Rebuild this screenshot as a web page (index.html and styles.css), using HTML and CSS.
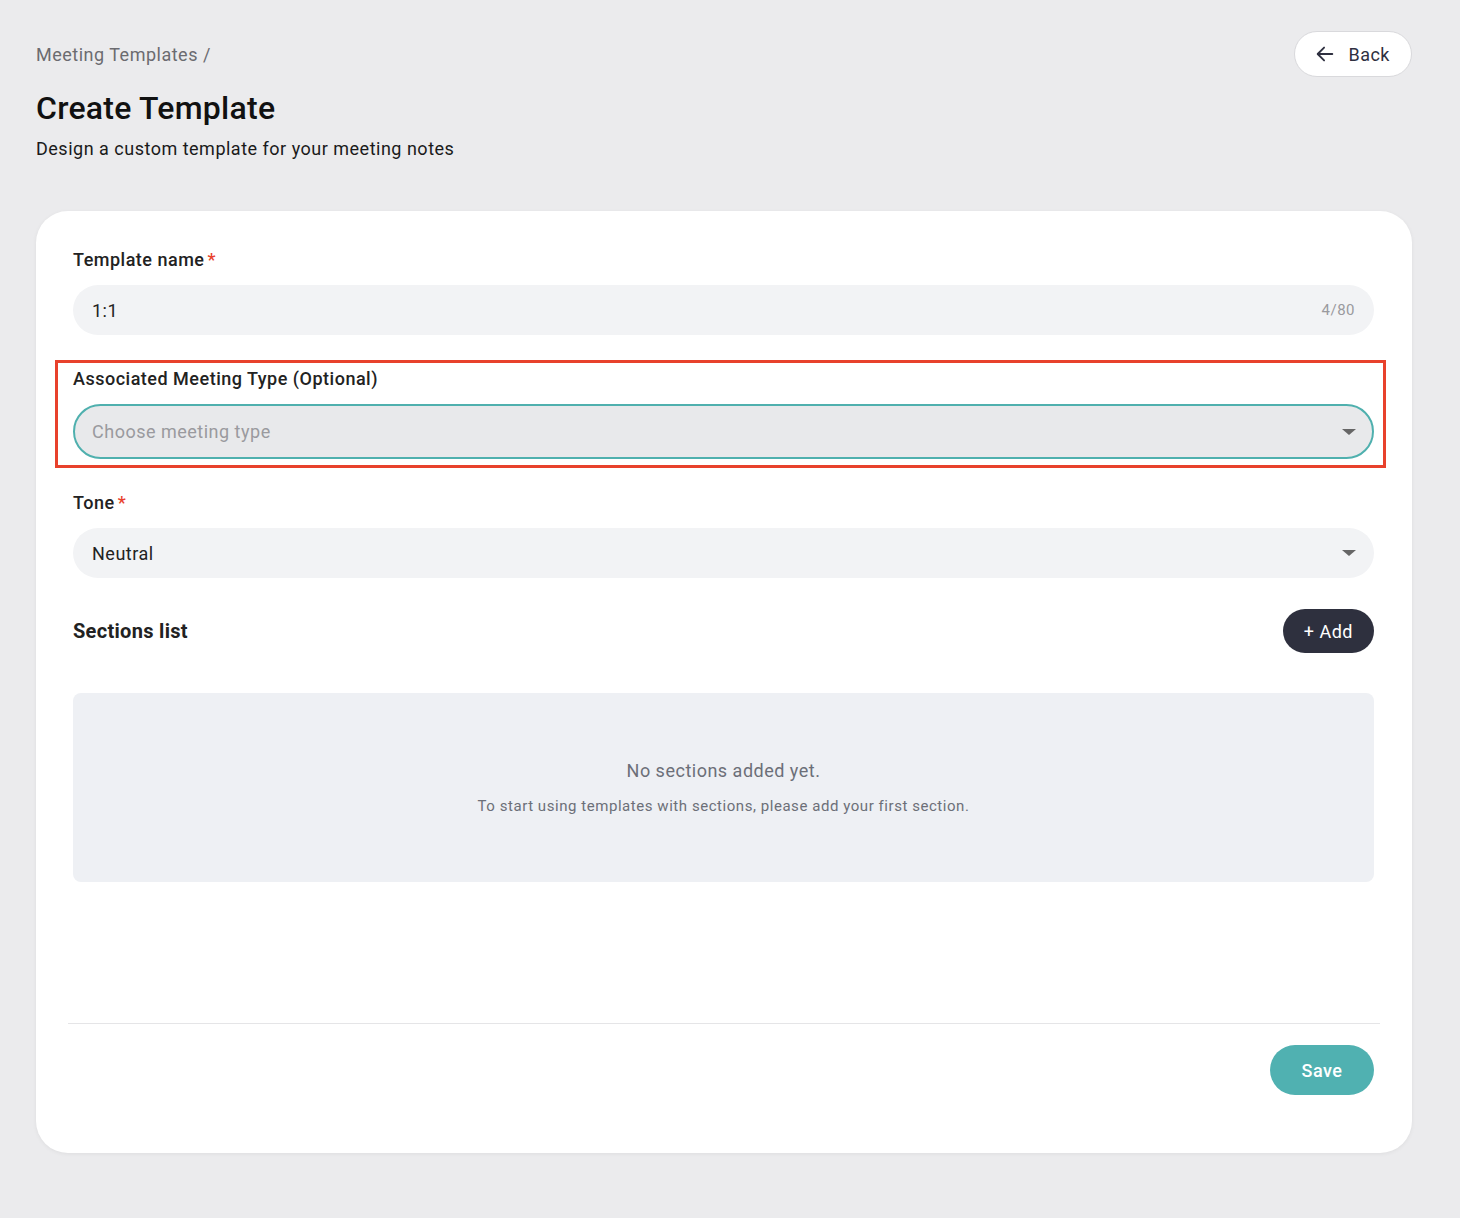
FILE: index.html
```html
<!DOCTYPE html>
<html lang="en">
<head>
    <meta charset="UTF-8">
    <meta name="viewport" content="width=device-width, initial-scale=1.0">
    <title>Create Template</title>
    <link rel="stylesheet" href="styles.css">
</head>
<body>
    <div class="page">
        <div class="top-bar">
            <span class="breadcrumb">Meeting Templates /</span>
            <button class="back-btn">
                <svg width="22" height="22" viewBox="0 0 24 24" fill="none" stroke="#2f3040" stroke-width="2" stroke-linecap="round" stroke-linejoin="round">
                    <path d="M20 12H4.5"/>
                    <path d="M11 5l-7 7 7 7"/>
                </svg>
                Back
            </button>
        </div>

        <h1>Create Template</h1>
        <p class="subtitle">Design a custom template for your meeting notes</p>

        <div class="card">
            <div class="card-body">
                <div class="field">
                    <label>Template name<span class="req">*</span></label>
                    <div class="input">
                        <span>1:1</span>
                        <span class="counter">4/80</span>
                    </div>
                </div>

                <div class="field highlighted">
                    <label>Associated Meeting Type (Optional)</label>
                    <div class="input select focused">
                        <span class="placeholder">Choose meeting type</span>
                        <span class="caret"></span>
                    </div>
                </div>

                <div class="field last">
                    <label>Tone<span class="req">*</span></label>
                    <div class="input select">
                        <span>Neutral</span>
                        <span class="caret"></span>
                    </div>
                </div>

                <div class="sections-head">
                    <h2>Sections list</h2>
                    <button class="add-btn">+ Add</button>
                </div>

                <div class="empty">
                    <p class="empty-title">No sections added yet.</p>
                    <p class="empty-text">To start using templates with sections, please add your first section.</p>
                </div>
            </div>

            <div class="card-footer">
                <button class="save-btn">Save</button>
            </div>
        </div>
    </div>
</body>
</html>
```

FILE: styles.css
```css
:root {
    --bg: #ebebed;
    --text: #1f1f22;
    --muted: #6b6b70;
    --input-bg: #f2f3f5;
    --teal: #50b1b1;
    --dark: #2e303e;
    --red: #e8412c;
}

body {
    margin: 0;
    background: var(--bg);
    font-family: Roboto, "Liberation Sans", sans-serif;
    letter-spacing: 0.5px;
    color: var(--text);
}

button {
    font-family: inherit;
    letter-spacing: inherit;
    cursor: pointer;
}

.page {
    padding: 31px 48px 65px 36px;
}

.top-bar {
    display: flex;
    justify-content: space-between;
    align-items: center;
}

.breadcrumb {
    font-size: 18px;
    color: var(--muted);
}

.back-btn {
    display: flex;
    align-items: center;
    gap: 12px;
    height: 46px;
    padding: 0 21px 0 19px;
    background: #fff;
    border: 1px solid #d9d9dc;
    border-radius: 23px;
    font-size: 18px;
    color: #2f3040;
}

h1 {
    margin: 12px 0 0;
    font-size: 32px;
    font-weight: 500;
    line-height: 38px;
    letter-spacing: 0.25px;
    color: #111;
}

.subtitle {
    margin: 10px 0 0;
    font-size: 18px;
    line-height: 24px;
    color: #1a1a1a;
}

.card {
    margin-top: 50px;
    background: #fff;
    border-radius: 32px;
    box-shadow: 0 1px 4px rgba(0, 0, 0, 0.06);
}

.card-body {
    padding: 38px 38px 0 37px;
    min-height: 812px;
    box-sizing: border-box;
}

.field {
    margin-bottom: 33px;
}

.field.last {
    margin-bottom: 0;
}

.field label {
    display: block;
    font-size: 18px;
    font-weight: 500;
    line-height: 22px;
    color: #222;
    margin-bottom: 14px;
}

.req {
    color: var(--red);
    margin-left: 3px;
}

.highlighted {
    position: relative;
}

/* review annotation drawn around the field */
.highlighted::after {
    content: "";
    position: absolute;
    left: -18px;
    right: -12px;
    top: -8px;
    bottom: -9px;
    border: 3px solid var(--red);
    pointer-events: none;
}

.input {
    display: flex;
    align-items: center;
    justify-content: space-between;
    height: 50px;
    padding: 0 19px;
    background: var(--input-bg);
    border-radius: 25px;
    font-size: 18px;
    color: #222;
    box-sizing: border-box;
}

.counter {
    font-size: 15px;
    color: #9a9a9e;
}

.select {
    padding-right: 18px;
}

.select.focused {
    height: 55px;
    border: 2px solid #4fb0ae;
    border-radius: 28px;
    background: #e8e9eb;
    padding-left: 17px;
    padding-right: 16px;
}

.placeholder {
    color: #9a9a9e;
}

.caret {
    width: 0;
    height: 0;
    border-left: 7px solid transparent;
    border-right: 7px solid transparent;
    border-top: 6px solid #666;
}

.sections-head {
    display: flex;
    justify-content: space-between;
    align-items: center;
    margin-top: 31px;
}

.sections-head h2 {
    margin: 0;
    font-size: 20px;
    font-weight: 700;
    letter-spacing: 0.3px;
    color: #222;
}

.add-btn {
    height: 44px;
    padding: 0 21px;
    background: var(--dark);
    color: #fff;
    border: none;
    border-radius: 22px;
    font-size: 18px;
}

.empty {
    margin-top: 40px;
    height: 189px;
    background: #eef0f4;
    border-radius: 8px;
    display: flex;
    flex-direction: column;
    align-items: center;
    justify-content: center;
    text-align: center;
}

.empty p {
    margin: 0;
}

.empty-title {
    font-size: 18px;
    color: #6c6f78;
}

.empty .empty-text {
    margin-top: 16px;
    font-size: 15px;
    letter-spacing: 0.55px;
    color: #6c6f78;
}

.card-footer {
    margin: 0 32px;
    padding: 21px 6px 58px 5px;
    border-top: 1px solid #e5e5e7;
    display: flex;
    justify-content: flex-end;
}

.save-btn {
    width: 104px;
    height: 50px;
    background: var(--teal);
    color: #fff;
    border: none;
    border-radius: 25px;
    font-size: 18px;
    font-weight: 500;
}
```
